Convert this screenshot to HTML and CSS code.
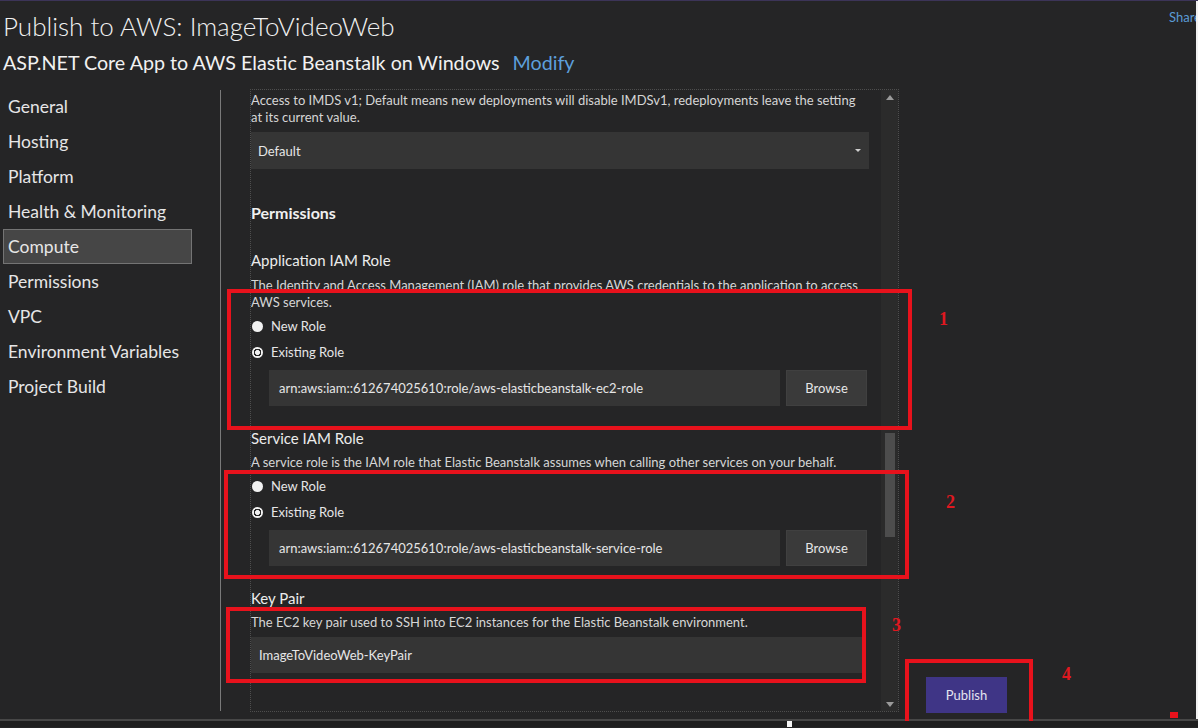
FILE: index.html
```html
<!DOCTYPE html>
<html lang="en">
<head>
<meta charset="utf-8">
<title>Publish to AWS</title>
<link rel="stylesheet" href="styles.css">
</head>
<body>
<div class="topline"></div>
<div class="frame">
  <header class="header">
    <div class="titles">
      <h1 class="title">Publish to AWS: ImageToVideoWeb</h1>
      <div class="subtitle"><span>ASP.NET Core App to AWS Elastic Beanstalk on Windows</span><a class="modify">Modify</a></div>
    </div>
    <div class="share">Share</div>
  </header>
  <div class="main">
    <nav class="side">
      <div class="nav-item">General</div>
      <div class="nav-item">Hosting</div>
      <div class="nav-item">Platform</div>
      <div class="nav-item">Health &amp; Monitoring</div>
      <div class="nav-item active">Compute</div>
      <div class="nav-item">Permissions</div>
      <div class="nav-item">VPC</div>
      <div class="nav-item">Environment Variables</div>
      <div class="nav-item">Project Build</div>
    </nav>
    <div class="sep"></div>
    <section class="panel">
      <div class="form">
        <p class="note">Access to IMDS v1; Default means new deployments will disable IMDSv1, redeployments leave the setting at its current value.</p>
        <div class="select"><span>Default</span><span class="caret"></span></div>

        <h2 class="section-title">Permissions</h2>

        <h3 class="field-label first">Application IAM Role</h3>
        <p class="desc">The Identity and Access Management (IAM) role that provides AWS credentials to the application to access AWS services.</p>
        <div class="radios">
          <div class="radio"><span class="dot"></span>New Role</div>
          <div class="radio"><span class="dot checked"></span>Existing Role</div>
        </div>
        <div class="input-row">
          <div class="input">arn:aws:iam::612674025610:role/aws-elasticbeanstalk-ec2-role</div>
          <div class="btn">Browse</div>
        </div>

        <h3 class="field-label">Service IAM Role</h3>
        <p class="desc">A service role is the IAM role that Elastic Beanstalk assumes when calling other services on your behalf.</p>
        <div class="radios">
          <div class="radio"><span class="dot"></span>New Role</div>
          <div class="radio"><span class="dot checked"></span>Existing Role</div>
        </div>
        <div class="input-row">
          <div class="input">arn:aws:iam::612674025610:role/aws-elasticbeanstalk-service-role</div>
          <div class="btn">Browse</div>
        </div>

        <h3 class="field-label">Key Pair</h3>
        <p class="desc kp">The EC2 key pair used to SSH into EC2 instances for the Elastic Beanstalk environment.</p>
        <div class="input wide">ImageToVideoWeb-KeyPair</div>
      </div>
      <div class="scrollbar">
        <div class="sb-btn"><span class="tri-up"></span></div>
        <div class="sb-track"><div class="sb-thumb"></div></div>
        <div class="sb-btn"><span class="tri-down"></span></div>
      </div>
    </section>
    <div class="actions"><button class="publish">Publish</button></div>
  </div>
</div>
<div class="status"><span class="status-mark"></span></div>

<div class="annot a1"></div>
<div class="annot a2"></div>
<div class="annot a3"></div>
<div class="annot a4"></div>
<div class="num n1">1</div>
<div class="num n2">2</div>
<div class="num n3">3</div>
<div class="num n4">4</div>
<div class="mark-sq"></div>
</body>
</html>
```

FILE: styles.css
```css
* { box-sizing: border-box; }

html, body {
  margin: 0;
  padding: 0;
}

body {
  position: relative;
  width: 1198px;
  height: 728px;
  overflow: hidden;
  background: #252526;
  color: #e6e6e6;
  font-family: Lato, "Noto Sans", sans-serif;
}

.topline {
  height: 1px;
  background: #3c3458;
}

.frame {
  border-right: 2px solid #f2f2f2;
}

/* header */
.header {
  display: flex;
  padding: 7px 0 11px 3px;
}

.titles { flex: 1; }

.title {
  margin: 0;
  font-size: 26px;
  font-weight: 300;
  line-height: 36px;
  color: #f1f1f1;
}

.subtitle {
  margin-top: 5px;
  font-size: 19.7px;
  line-height: 28px;
  color: #f1f1f1;
  display: flex;
  gap: 13px;
}

.modify { color: #5d9fdc; }

.share {
  width: 27px;
  overflow: hidden;
  white-space: nowrap;
  font-size: 13px;
  color: #5b9bd5;
  padding-top: 1px;
  line-height: 16px;
}

/* main */
.main {
  display: flex;
  align-items: flex-start;
  height: 631px;
}

.side {
  width: 220px;
  padding-top: 1px;
}

.nav-item {
  margin-left: 3px;
  width: 189px;
  height: 35px;
  line-height: 33px;
  padding-left: 4px;
  border: 1px solid transparent;
  font-size: 17.5px;
  color: #e6e6e6;
}

.nav-item.active {
  background: #464646;
  border-color: #747474;
}

.sep {
  width: 1px;
  height: 621px;
  margin-top: 2px;
  background: #7a7a7a;
}

.panel {
  margin-left: 29px;
  margin-top: 1px;
  width: 649px;
  height: 623px;
  border: 1px dotted #4e4e4e;
  display: flex;
  overflow: hidden;
}

.form {
  width: 618px;
  padding-top: 2px;
}

.note, .desc {
  margin: 0;
  font-size: 13px;
  line-height: 17px;
  color: #d6d6d6;
}

.note { padding-right: 8px; }

.select {
  margin-top: 6px;
  height: 37px;
  background: #353535;
  display: flex;
  align-items: center;
  justify-content: space-between;
  padding: 0 8px 0 7px;
  font-size: 13px;
  color: #e6e6e6;
}

.caret {
  width: 0;
  height: 0;
  border-left: 3px solid transparent;
  border-right: 3px solid transparent;
  border-top: 3px solid #cfcfcf;
}

.section-title {
  margin: 33px 0 0;
  font-size: 16px;
  font-weight: 700;
  line-height: 22px;
  color: #f0f0f0;
}

.field-label {
  margin: 21px 0 0;
  font-size: 15px;
  font-weight: 400;
  line-height: 22px;
  color: #ececec;
}

.field-label.first { margin-top: 25px; }

.desc { margin-top: 6px; }
.field-label + .desc { margin-top: 5px; }
.field-label.first + .desc { margin-top: 6px; }

.radios { margin-top: 2px; }

.radio {
  display: flex;
  align-items: center;
  gap: 8px;
  height: 26px;
  padding-left: 1px;
  font-size: 13px;
  color: #e6e6e6;
}

.dot {
  width: 11px;
  height: 11px;
  border-radius: 50%;
  background: #f2f2f2;
}

.dot.checked {
  background: radial-gradient(circle, #f2f2f2 0 2.2px, #262626 2.6px 3.6px, #f2f2f2 4px);
}

.input-row {
  margin-top: 5px;
  margin-left: 18px;
  margin-right: 2px;
  display: flex;
  gap: 6px;
  height: 36px;
}

.input {
  flex: 1;
  background: #353535;
  display: flex;
  align-items: center;
  padding-left: 10px;
  font-size: 13px;
  color: #e6e6e6;
}

.btn {
  width: 81px;
  background: #3a3a3a;
  border: 1px solid #404040;
  display: flex;
  align-items: center;
  justify-content: center;
  font-size: 13px;
  color: #e6e6e6;
}

.input.wide {
  margin-top: 6px;
  height: 36px;
  padding-left: 8px;
  margin-right: 3px;
}

/* scrollbar */
.scrollbar {
  margin-left: auto;
  width: 17px;
  height: 100%;
  background: #2b2b2b;
  display: flex;
  flex-direction: column;
}

.sb-btn {
  height: 14px;
  display: flex;
  align-items: center;
  justify-content: center;
}

.tri-up, .tri-down {
  width: 0;
  height: 0;
  border-left: 4px solid transparent;
  border-right: 4px solid transparent;
}

.tri-up { border-bottom: 5px solid #9a9a9a; }
.tri-down { border-top: 5px solid #9a9a9a; }

.sb-track { flex: 1; }

.sb-thumb {
  margin: 329px 0 0 4px;
  width: 10px;
  height: 104px;
  background: #4d4d4d;
}

/* actions */
.actions {
  margin-left: 27px;
  align-self: stretch;
  display: flex;
  align-items: flex-end;
  padding-bottom: 6px;
}

.publish {
  width: 81px;
  height: 36px;
  border: none;
  background: #3f3586;
  color: #e4e4f0;
  font-family: Lato, "Noto Sans", sans-serif;
  font-size: 13px;
  padding: 0;
}

/* status */
.status {
  height: 8px;
  border-top: 2px solid #474747;
  background: #1f1f1f;
  display: flex;
}

.status-mark {
  margin-left: 787px;
  width: 5px;
  height: 6px;
  background: #f5f5f5;
}

/* annotations */
.annot {
  position: absolute;
  border: 4px solid #e8121c;
}

.a1 { left: 227px; top: 289px; width: 685px; height: 141px; }
.a2 { left: 224px; top: 470px; width: 685px; height: 109px; }
.a3 { left: 226px; top: 607px; width: 640px; height: 76px; }
.a4 { left: 905px; top: 659px; width: 128px; height: 62px; border-bottom: none; }

.num {
  position: absolute;
  font-family: "Liberation Serif", serif;
  font-weight: 700;
  font-size: 18px;
  line-height: 18px;
  color: #e01820;
}

.n1 { left: 939px; top: 310px; }
.n2 { left: 946px; top: 493px; }
.n3 { left: 892px; top: 616px; }
.n4 { left: 1062px; top: 665px; }

.mark-sq {
  position: absolute;
  left: 1170px;
  top: 712px;
  width: 8px;
  height: 6px;
  background: #e8121c;
}
```
